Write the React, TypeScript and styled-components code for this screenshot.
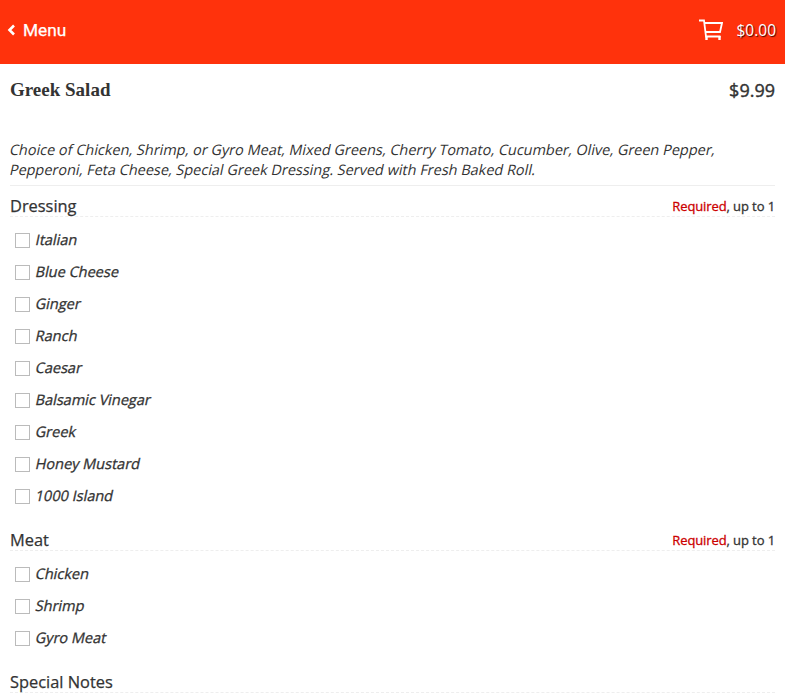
import * as React from "react";
import styled, { createGlobalStyle } from "styled-components";

const GlobalStyle = createGlobalStyle`
  html, body {
    margin: 0;
    padding: 0;
    background: #fff;
    height: 693px;
    overflow: hidden;
    font-family: "Open Sans", sans-serif;
    color: #333;
  }
`;

const Header = styled.header`
  height: 64px;
  background: #ff320c;
  color: #fff;
  display: flex;
  align-items: center;
  justify-content: space-between;
  padding: 0 9px 4px 7px;
  box-sizing: border-box;
`;

const BackLink = styled.div`
  display: flex;
  align-items: center;
  gap: 7px;
  font-family: Roboto, sans-serif;
  font-size: 17.3px;
  -webkit-text-stroke: 0.25px #fff;
`;

const Cart = styled.div`
  display: flex;
  align-items: center;
  gap: 13px;
  font-size: 15.5px;
  text-shadow: 1px 1px 1px #400;
`;

const Main = styled.main`
  padding: 0 10px;
`;

const TitleRow = styled.div`
  display: flex;
  justify-content: space-between;
  align-items: center;
  height: 52px;
`;

const Title = styled.h1`
  margin: 0;
  font-family: "Liberation Serif", serif;
  font-size: 19px;
  font-weight: bold;
`;

const Price = styled.div`
  font-size: 18px;
  -webkit-text-stroke: 0.4px #333;
`;

const Description = styled.p`
  margin: 24px 0 0;
  padding-bottom: 5px;
  font-size: 14.47px;
  line-height: 20px;
  border-bottom: 1px solid #eee;
`;

// the reference shows a slanted upright face rather than a true italic
const Slanted = styled.span`
  display: block;
  white-space: nowrap;
  transform: skewX(-12deg);
`;

const GroupHeader = styled.div<{ $gap: number }>`
  display: flex;
  justify-content: space-between;
  align-items: flex-start;
  height: 31px;
  margin-top: ${(p) => p.$gap}px;
  border-bottom: 1px dashed #eee;
  box-sizing: border-box;
`;

const GroupName = styled.h2`
  margin: 0;
  font-size: 16.4px;
  font-weight: 400;
  line-height: 39px;
  -webkit-text-stroke: 0.25px #333;
`;

const Rule = styled.div`
  font-size: 13px;
  line-height: 40px;
  letter-spacing: -0.1px;
  -webkit-text-stroke: 0.3px currentColor;
`;

const Required = styled.span`
  color: #c00;
`;

const Options = styled.div`
  display: flex;
  flex-direction: column;
  padding: 6px 0 0 5px;
`;

const Option = styled.label`
  display: flex;
  align-items: center;
  gap: 6px;
  height: 32px;
  font-size: 14.5px;
  -webkit-text-stroke: 0.3px #333;
`;

const Box = styled.span`
  width: 13px;
  height: 13px;
  margin-top: 2px;
  border: 1px solid #bbb;
  background: #fff;
`;

const dressings = [
  "Italian",
  "Blue Cheese",
  "Ginger",
  "Ranch",
  "Caesar",
  "Balsamic Vinegar",
  "Greek",
  "Honey Mustard",
  "1000 Island",
];
const meats = ["Chicken", "Shrimp", "Gyro Meat"];

const OptionList = ({ items }: { items: string[] }) => (
  <Options>
    {items.map((item) => (
      <Option key={item}>
        <Box />
        <Slanted>{item}</Slanted>
      </Option>
    ))}
  </Options>
);

export default function App() {
  return (
    <>
      <GlobalStyle />
      <Header>
        <BackLink>
          <svg width="9" height="12" viewBox="0 0 9 12">
            <path d="M7 1.5 2.5 6 7 10.5" fill="none" stroke="#fff" strokeWidth="2.6" />
          </svg>
          Menu
        </BackLink>
        <Cart>
          <svg width="24" height="22" viewBox="0 0 24 22" fill="none" stroke="#fff" strokeWidth="1.8">
            <path d="M0 1.5h5l2 16h14.5" />
            <path d="M5.5 4h17.5l-2 9H6.7" />
            <path d="M7.5 17v4M20.5 17v4" strokeWidth="2.4" />
          </svg>
          $0.00
        </Cart>
      </Header>
      <Main>
        <TitleRow>
          <Title>Greek Salad</Title>
          <Price>$9.99</Price>
        </TitleRow>
        <Description>
          <Slanted>
            Choice of Chicken, Shrimp, or Gyro Meat, Mixed Greens, Cherry Tomato, Cucumber, Olive, Green Pepper,
          </Slanted>
          <Slanted>Pepperoni, Feta Cheese, Special Greek Dressing. Served with Fresh Baked Roll.</Slanted>
        </Description>
        <GroupHeader $gap={0}>
          <GroupName>Dressing</GroupName>
          <Rule>
            <Required>Required</Required>, up to 1
          </Rule>
        </GroupHeader>
        <OptionList items={dressings} />
        <GroupHeader $gap={9}>
          <GroupName>Meat</GroupName>
          <Rule>
            <Required>Required</Required>, up to 1
          </Rule>
        </GroupHeader>
        <OptionList items={meats} />
        <GroupHeader $gap={9}>
          <GroupName>Special Notes</GroupName>
        </GroupHeader>
      </Main>
    </>
  );
}
